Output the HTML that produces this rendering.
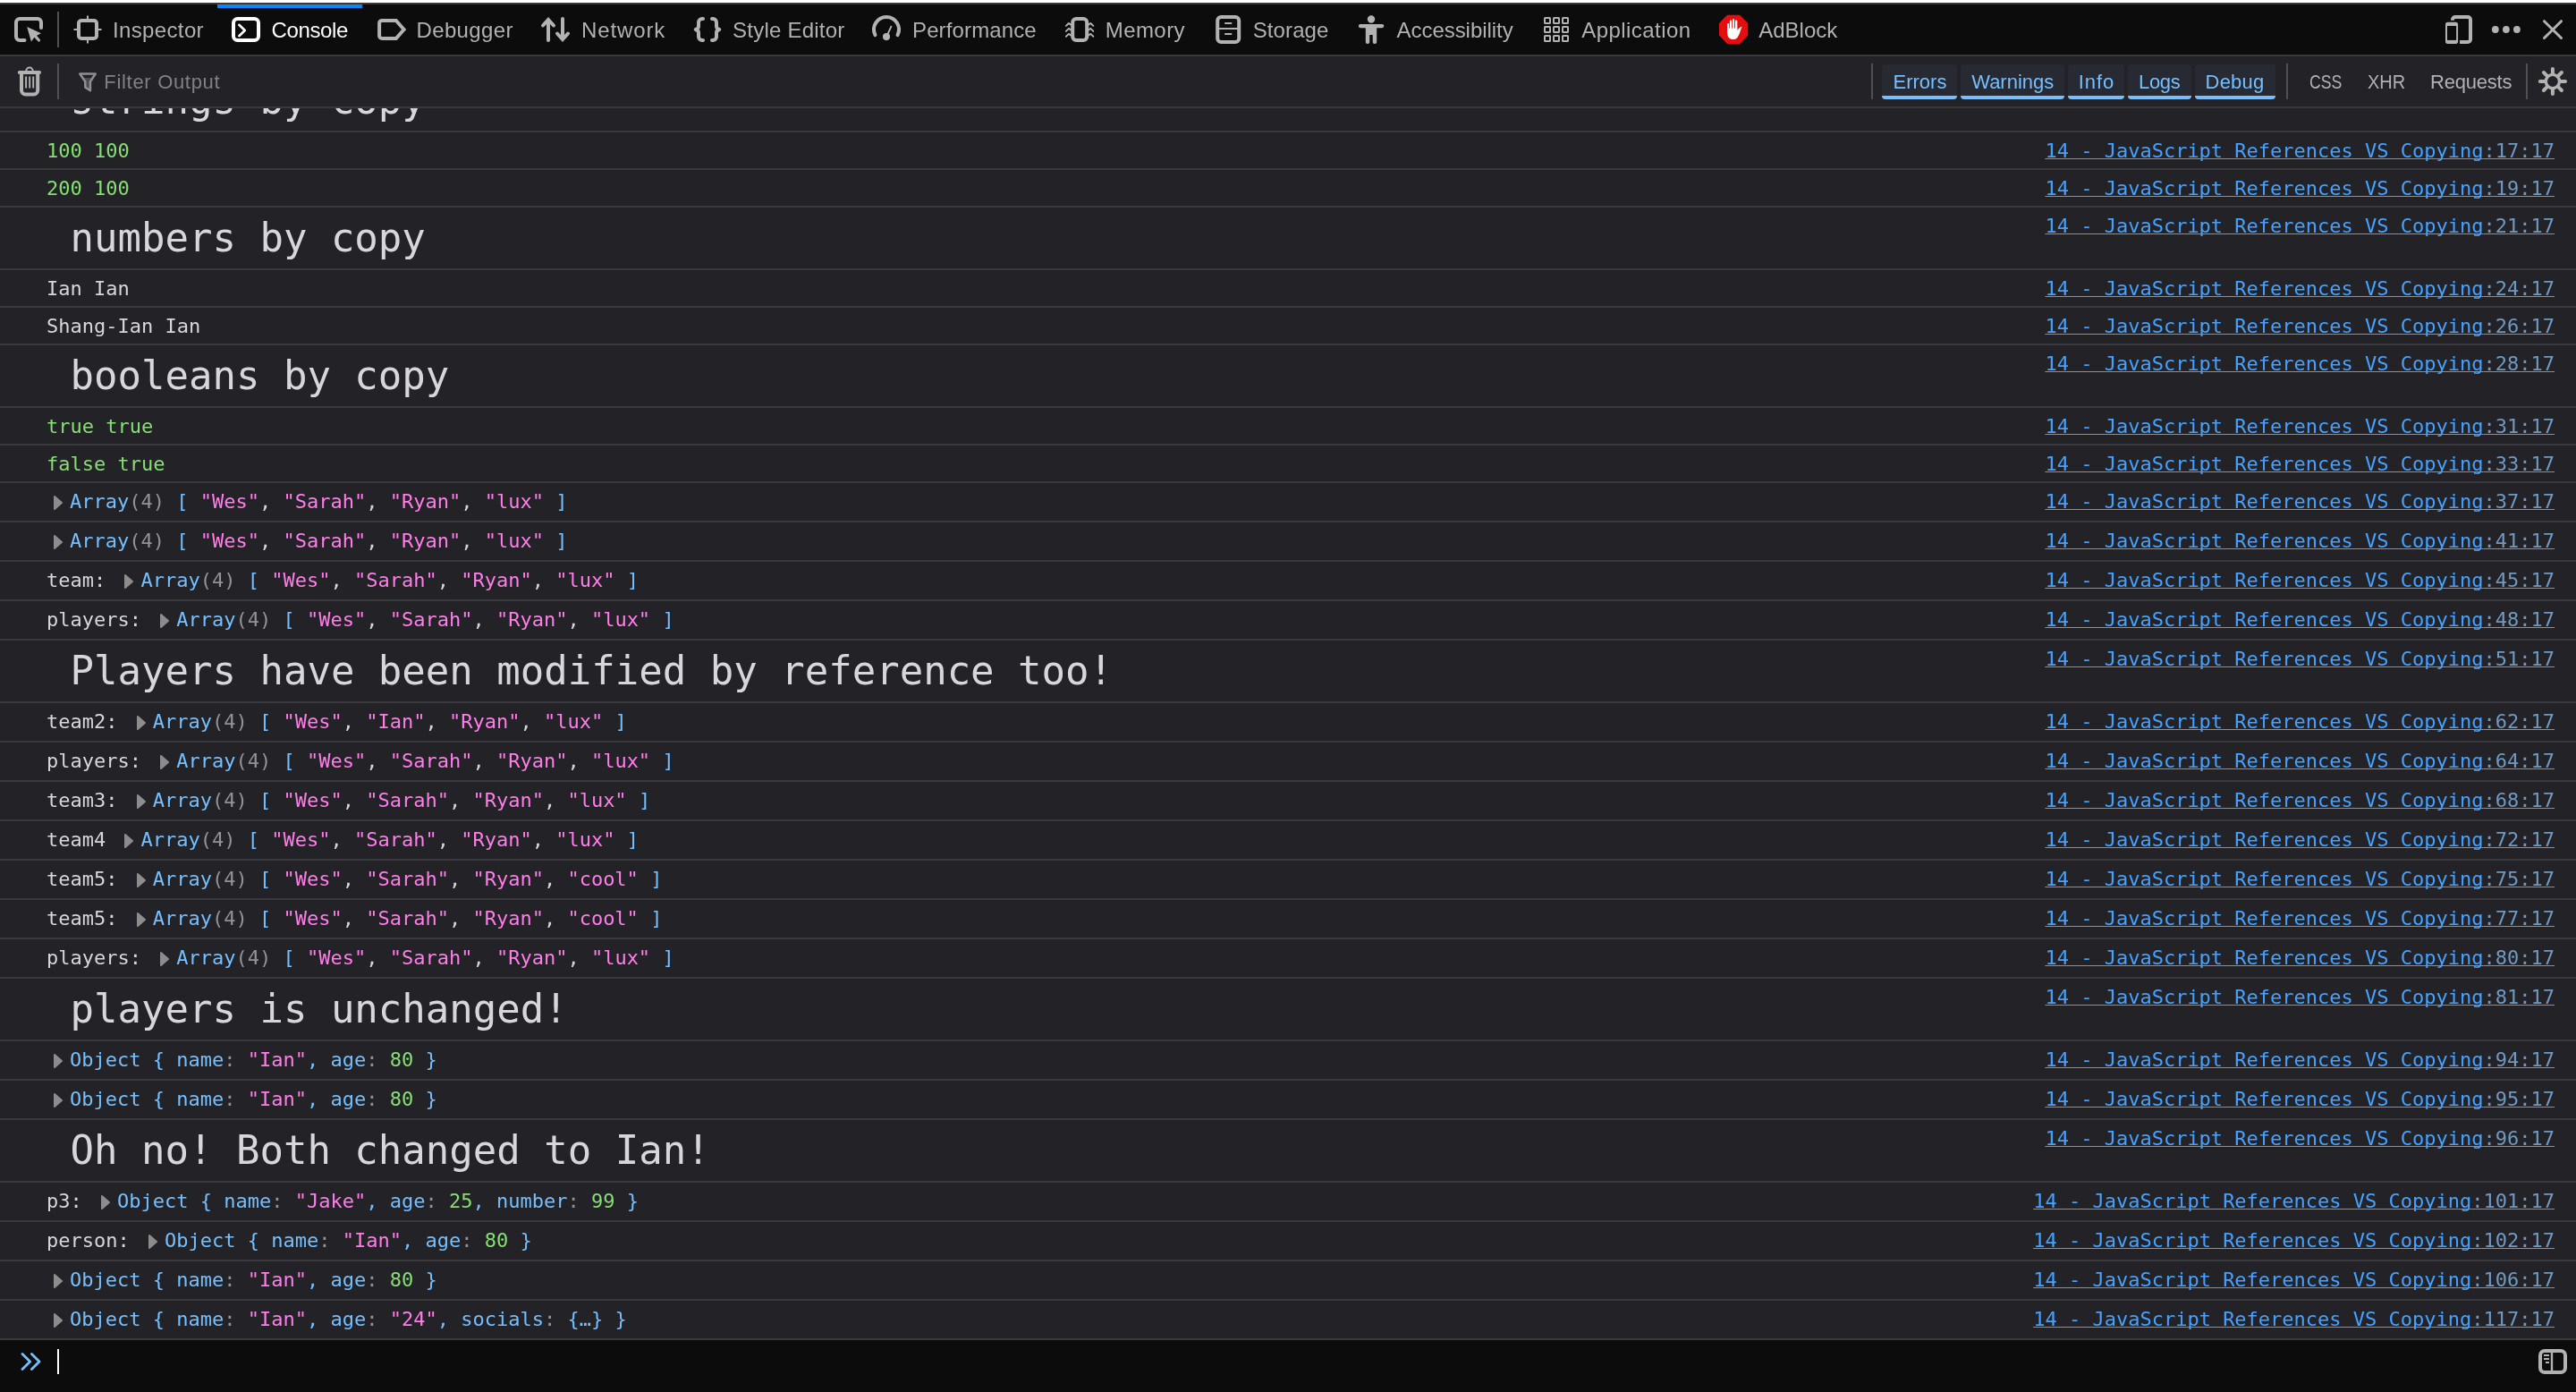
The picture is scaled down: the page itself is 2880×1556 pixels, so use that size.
<!DOCTYPE html>
<html lang="en">
<head>
<meta charset="utf-8">
<title>Console</title>
<style>
html,body{margin:0;padding:0;}
body{width:2880px;height:1556px;overflow:hidden;background:#232327;position:relative;
 font-family:"Liberation Sans","DejaVu Sans",sans-serif;color:#b1b1b3;}
b,i,em{font-weight:normal;font-style:normal;}
#topwhite{position:absolute;left:0;top:0;width:2880px;height:3px;background:#fff;}
#topline{position:absolute;left:0;top:3px;width:2880px;height:2px;background:#38383d;}
#tabs{position:absolute;left:0;top:5px;width:2880px;height:56px;background:#0c0c0d;}
#tabsb{position:absolute;left:0;top:61px;width:2880px;height:2px;background:#38383d;}
#filter{position:absolute;left:0;top:63px;width:2880px;height:56px;background:#232327;}
#filterb{position:absolute;left:0;top:119px;width:2880px;height:2px;background:#38383d;}
#out{will-change:transform;position:absolute;left:0;top:121px;width:2880px;height:1377px;overflow:hidden;
 font-family:"DejaVu Sans Mono","Liberation Mono",monospace;font-size:22px;color:#d7d7db;}
#input{position:absolute;left:0;top:1498px;width:2880px;height:58px;background:#0c0c0d;}
.r{position:relative;box-sizing:border-box;border-bottom:2px solid #38383d;height:42px;width:2880px;}
.r.ob{height:44px;}
.r.big{height:70px;}
.r.first{margin-top:-43px;}
.m{position:absolute;left:52px;top:1px;line-height:40px;height:40px;white-space:pre;}
.bt{font-size:44px;line-height:68px;display:inline-block;height:68px;position:relative;top:-1px;}
.lk{position:absolute;right:24px;top:1px;line-height:40px;color:#45a1ff;text-decoration:underline;text-decoration-skip-ink:none;text-decoration-thickness:1px;text-underline-offset:1px;}
.lk em{color:#7099c2;}
.n{color:#86de74;}
.s{color:#ff7de9;}
.o{color:#75bfff;}
.g{color:#939395;}
.k{color:#939395;}
.c{color:#d7d7db;}
.tw{display:inline-block;width:26px;height:18px;vertical-align:-3px;fill:#8c8c8e;stroke:#8c8c8e;stroke-width:2;stroke-linejoin:round;}

#tabs,#filter{will-change:transform;}
.lb{position:absolute;white-space:pre;color:#b1b1b3;}
.lb.t{top:1px;line-height:56px;font-size:24px;}
.lb.t.on{color:#fff;}
.lb.f{top:1px;line-height:56px;font-size:22px;}
.lb.ph{color:#808085;}
.lb.bl{color:#75bfff;}
.sp{position:absolute;width:2px;background:#505053;}
.act{position:absolute;left:243px;top:0;width:162px;height:4px;background:#0a84ff;}
.fb{position:absolute;top:9px;height:39px;background:linear-gradient(to bottom,#282a33 35px,#75bfff 35px);border-radius:4px;}
#ico{position:absolute;left:0;top:0;}
#input svg{position:absolute;left:0;top:0;}
.caret{position:absolute;left:64px;top:10px;width:2px;height:28px;background:#fff;}
</style>
</head>
<body>
<div id="topwhite"></div><div id="topline"></div>
<div id="tabs"><i class="act"></i><i class="sp" style="left:64px;top:8px;height:40px"></i><span class="lb t" style="left:126.0px;letter-spacing:0.36px;">Inspector</span><span class="lb t on" style="left:303.6px;letter-spacing:-0.38px;">Console</span><span class="lb t" style="left:465.5px;letter-spacing:0.36px;">Debugger</span><span class="lb t" style="left:650.0px;letter-spacing:0.87px;">Network</span><span class="lb t" style="left:819.0px;letter-spacing:0.24px;">Style Editor</span><span class="lb t" style="left:1020.0px;letter-spacing:0.13px;">Performance</span><span class="lb t" style="left:1235.7px;letter-spacing:0.45px;">Memory</span><span class="lb t" style="left:1400.7px;letter-spacing:0.11px;">Storage</span><span class="lb t" style="left:1561.5px;letter-spacing:-0.04px;">Accessibility</span><span class="lb t" style="left:1768.3px;letter-spacing:0.44px;">Application</span><span class="lb t" style="left:1966.2px;letter-spacing:0.02px;">AdBlock</span></div><div id="tabsb"></div>
<div id="filter"><i class="sp" style="left:64px;top:8px;height:40px"></i><i class="sp" style="left:2092px;top:8px;height:40px"></i><i class="sp" style="left:2556px;top:8px;height:40px"></i><i class="sp" style="left:2824px;top:8px;height:40px"></i><i class="fb" style="left:2104px;width:84px"></i><i class="fb" style="left:2192px;width:116px"></i><i class="fb" style="left:2312px;width:63px"></i><i class="fb" style="left:2379px;width:71px"></i><i class="fb" style="left:2454px;width:90px"></i><span class="lb f ph" style="left:116.3px;letter-spacing:0.69px;">Filter Output</span><span class="lb f bl" style="left:2116.5px;letter-spacing:0.00px;">Errors</span><span class="lb f bl" style="left:2204.2px;letter-spacing:-0.01px;">Warnings</span><span class="lb f bl" style="left:2323.7px;letter-spacing:0.93px;">Info</span><span class="lb f bl" style="left:2391.0px;letter-spacing:-0.33px;">Logs</span><span class="lb f bl" style="left:2465.5px;letter-spacing:0.25px;">Debug</span><span class="lb f" style="left:2581.8px;transform:scaleX(0.805);transform-origin:0 0;">CSS</span><span class="lb f" style="left:2646.7px;transform:scaleX(0.909);transform-origin:0 0;">XHR</span><span class="lb f" style="left:2717.0px;letter-spacing:-0.22px;">Requests</span></div><div id="filterb"></div>

<svg id="ico" width="2880" height="121" viewBox="0 0 2880 121" fill="none" stroke="#b2b2b3" stroke-width="4" stroke-linecap="round" stroke-linejoin="round">
<!-- picker -->
<path d="M46 31V25a4 4 0 0 0-4-4H22a4 4 0 0 0-4 4V41a4 4 0 0 0 4 4H27.5"/>
<path d="M30.2 30L46 37.200L41 39.700L44.7 44a1.6 1.6 0 0 1-2.4 2.100L38.4 41.800L34.9 46.500Z" fill="#b2b2b3" stroke="none"/>
<!-- inspector -->
<rect x="88" y="23" width="20" height="20" rx="3"/>
<path d="M98 17.500V21M98 45V48.500M82.5 33H86M110 33H113.5" stroke-width="2" stroke-linecap="butt"/>
<!-- console (active, white) -->
<g stroke="#fff"><rect x="261" y="21" width="28" height="24" rx="4.5"/>
<path d="M267.3 27.800L273.8 34L267.3 40.2" stroke-width="2.6"/></g>
<!-- debugger -->
<path d="M424.1 25.900a3 3 0 0 1 3-3H442.800L451.6 32.950L442.8 43H427.100a3 3 0 0 1-3-3Z" stroke-linejoin="miter"/>
<!-- network -->
<path d="M613 45V23M629 21V43"/><path d="M607 28.500L613 22L619 28.500M623 37.500L629 44L635 37.5" stroke-linejoin="miter"/>
<!-- style editor braces -->
<path d="M786 21h-1a4 4 0 0 0-4 4v4.500q0 2.5-3.3 3.500q3.3 1 3.3 3.500v4.500a4 4 0 0 0 4 4h1M796 21h1a4 4 0 0 1 4 4v4.500q0 2.5 3.3 3.500q-3.3 1-3.3 3.500v4.500a4 4 0 0 1-4 4h-1"/>
<!-- performance -->
<path d="M978.450 39.200A14 14 0 1 1 1003.550 39.2"/>
<circle cx="991" cy="41.1" r="4.050" fill="#b2b2b3" stroke="none"/>
<path d="M991 41.100L996.7 29" stroke-width="1.8" stroke-linecap="butt"/>
<!-- memory -->
<rect x="1199.2" y="21" width="16" height="24" rx="4"/>
<path d="M1191.9 28.9L1194.9 26.0L1197.2 27.6M1222.3 28.9L1219.3 26.0L1217 27.6M1191.9 34.9L1194.9 31.9L1197.2 33.5M1222.3 34.9L1219.3 31.9L1217 33.5M1191.9 40.8L1194.9 37.9L1197.2 39.5M1222.3 40.8L1219.3 37.9L1217 39.5" stroke-width="1.9"/>
<!-- storage -->
<rect x="1361.2" y="19" width="24" height="28" rx="4"/>
<path d="M1361.2 32H1385.2" stroke-width="2" stroke-linecap="butt"/>
<path d="M1369.2 26H1377.200M1369.2 38H1377.2" stroke-width="2" stroke-linecap="butt"/>
<!-- accessibility -->
<g fill="#b2b2b3" stroke="none"><circle cx="1533" cy="21.5" r="4.2"/>
<rect x="1518.8" y="27" width="28.5" height="4.2" rx="2.1"/>
<path d="M1526.8 29H1539.200V47a2 2 0 0 1-2 2h-.5a2 2 0 0 1-2-2V39h-3.500V47a2 2 0 0 1-2 2h-.4a2 2 0 0 1-2-2Z"/></g>
<!-- application grid -->
<g stroke-width="2" stroke-linejoin="miter"><rect x="1727" y="20" width="6" height="6" rx=".5"/><rect x="1737" y="20" width="6" height="6" rx=".5"/><rect x="1747" y="20" width="6" height="6" rx=".5"/>
<rect x="1727" y="30" width="6" height="6" rx=".5"/><rect x="1737" y="30" width="6" height="6" rx=".5"/><rect x="1747" y="30" width="6" height="6" rx=".5"/>
<rect x="1727" y="40" width="6" height="6" rx=".5"/><rect x="1737" y="40" width="6" height="6" rx=".5"/><rect x="1747" y="40" width="6" height="6" rx=".5"/></g>
<!-- adblock -->
<path d="M1931 16.800H1945L1954.2 26.100V39.500L1945 49H1931L1922 39.500V26.100Z" fill="#e40e0e" stroke="none"/>
<g fill="#fff" stroke="none"><rect x="1931.1" y="26" width="2.1" height="10" rx="1.050"/><rect x="1933.9" y="22.6" width="2.2" height="12" rx="1.1"/><rect x="1936.9" y="21" width="2.2" height="13" rx="1.1"/><rect x="1940" y="22.6" width="2.3" height="12" rx="1.1"/>
<path d="M1931.1 31.600H1942.300V34.300C1943.5 32.2 1945 30.3 1947.5 29.800C1946.6 32 1945.8 34.5 1944.9 37C1944 40 1942 44.1 1937.8 44.100C1933.5 44.1 1931.1 41 1931.1 37Z"/></g>
<!-- rdm -->
<path d="M2742 22.700V22a3 3 0 0 1 3-3H2759a3 3 0 0 1 3 3V44a3 3 0 0 1-3 3H2750" stroke-linecap="butt"/>
<rect x="2734" y="24.8" width="14.1" height="24.1" rx="2.6" fill="#b2b2b3" stroke="none"/><rect x="2736" y="29" width="10.1" height="15.9" fill="#0c0c0d" stroke="none"/>
<!-- dots -->
<g fill="#b2b2b3" stroke="none"><circle cx="2789.8" cy="33" r="3.9"/><circle cx="2801.9" cy="33" r="3.9"/><circle cx="2813.9" cy="33" r="3.9"/></g>
<!-- close -->
<path d="M2844.5 23.700L2863.5 42.500M2863.5 23.700L2844.5 42.5" stroke-width="3"/>
<!-- trash -->
<path d="M21.8 81.100H44M24 82V101a4.5 4.5 0 0 0 4.5 4.500H37.700a4.5 4.5 0 0 0 4.5-4.500V82"/>
<path d="M29.3 79.300a3.7 3.7 0 0 1 7.4 0" stroke-width="2"/>
<path d="M29.1 85.500V98.500M33.2 85.500V98.500M37.2 85.500V98.5" stroke-width="1.9" stroke-linecap="butt"/>
<!-- funnel -->
<path d="M92.5 87H103.500L100.9 91.300V101.300L95.3 97.600V91.300Z" fill="#4b4b50" stroke="none"/>
<path d="M89.3 82.500H106.700L100.9 91.300V101.300L95.3 97.600V91.300Z" stroke="#8f8f92" stroke-width="2.5" stroke-linejoin="round"/>
<!-- gear -->
<circle cx="2853.9" cy="91.0" r="7.6" stroke-width="3.4"/><path d="M2861.9 91.0L2868.0 91.0M2859.6 96.7L2863.9 101.0M2853.9 99.0L2853.9 105.1M2848.2 96.7L2843.9 101.0M2845.9 91.0L2839.8 91.0M2848.2 85.3L2843.9 81.0M2853.9 83.0L2853.9 76.9M2859.6 85.3L2863.9 81.0"/>
</svg>

<div id="out">
<div class="r big first"><span class="m"><span class="bt"> strings by copy</span></span></div>
<div class="r t"><span class="m"><b class="n">100 100</b></span><a class="lk">14 - JavaScript References VS Copying<em>:17:17</em></a></div>
<div class="r t"><span class="m"><b class="n">200 100</b></span><a class="lk">14 - JavaScript References VS Copying<em>:19:17</em></a></div>
<div class="r big"><span class="m"><span class="bt"> numbers by copy</span></span><a class="lk">14 - JavaScript References VS Copying<em>:21:17</em></a></div>
<div class="r t"><span class="m">Ian Ian</span><a class="lk">14 - JavaScript References VS Copying<em>:24:17</em></a></div>
<div class="r t"><span class="m">Shang-Ian Ian</span><a class="lk">14 - JavaScript References VS Copying<em>:26:17</em></a></div>
<div class="r big"><span class="m"><span class="bt"> booleans by copy</span></span><a class="lk">14 - JavaScript References VS Copying<em>:28:17</em></a></div>
<div class="r t"><span class="m"><b class="n">true true</b></span><a class="lk">14 - JavaScript References VS Copying<em>:31:17</em></a></div>
<div class="r t"><span class="m"><b class="n">false true</b></span><a class="lk">14 - JavaScript References VS Copying<em>:33:17</em></a></div>
<div class="r ob"><span class="m"><svg class="tw" viewBox="0 0 26 18"><path d="M9 2L17 9L9 16Z"/></svg><b class="o">Array</b><b class="g">(4)</b> <b class="o">[</b> <b class="s">"Wes"</b><b class="c">,</b> <b class="s">"Sarah"</b><b class="c">,</b> <b class="s">"Ryan"</b><b class="c">,</b> <b class="s">"lux"</b> <b class="o">]</b></span><a class="lk">14 - JavaScript References VS Copying<em>:37:17</em></a></div>
<div class="r ob"><span class="m"><svg class="tw" viewBox="0 0 26 18"><path d="M9 2L17 9L9 16Z"/></svg><b class="o">Array</b><b class="g">(4)</b> <b class="o">[</b> <b class="s">"Wes"</b><b class="c">,</b> <b class="s">"Sarah"</b><b class="c">,</b> <b class="s">"Ryan"</b><b class="c">,</b> <b class="s">"lux"</b> <b class="o">]</b></span><a class="lk">14 - JavaScript References VS Copying<em>:41:17</em></a></div>
<div class="r ob"><span class="m">team: <svg class="tw" viewBox="0 0 26 18"><path d="M9 2L17 9L9 16Z"/></svg><b class="o">Array</b><b class="g">(4)</b> <b class="o">[</b> <b class="s">"Wes"</b><b class="c">,</b> <b class="s">"Sarah"</b><b class="c">,</b> <b class="s">"Ryan"</b><b class="c">,</b> <b class="s">"lux"</b> <b class="o">]</b></span><a class="lk">14 - JavaScript References VS Copying<em>:45:17</em></a></div>
<div class="r ob"><span class="m">players: <svg class="tw" viewBox="0 0 26 18"><path d="M9 2L17 9L9 16Z"/></svg><b class="o">Array</b><b class="g">(4)</b> <b class="o">[</b> <b class="s">"Wes"</b><b class="c">,</b> <b class="s">"Sarah"</b><b class="c">,</b> <b class="s">"Ryan"</b><b class="c">,</b> <b class="s">"lux"</b> <b class="o">]</b></span><a class="lk">14 - JavaScript References VS Copying<em>:48:17</em></a></div>
<div class="r big"><span class="m"><span class="bt"> Players have been modified by reference too!</span></span><a class="lk">14 - JavaScript References VS Copying<em>:51:17</em></a></div>
<div class="r ob"><span class="m">team2: <svg class="tw" viewBox="0 0 26 18"><path d="M9 2L17 9L9 16Z"/></svg><b class="o">Array</b><b class="g">(4)</b> <b class="o">[</b> <b class="s">"Wes"</b><b class="c">,</b> <b class="s">"Ian"</b><b class="c">,</b> <b class="s">"Ryan"</b><b class="c">,</b> <b class="s">"lux"</b> <b class="o">]</b></span><a class="lk">14 - JavaScript References VS Copying<em>:62:17</em></a></div>
<div class="r ob"><span class="m">players: <svg class="tw" viewBox="0 0 26 18"><path d="M9 2L17 9L9 16Z"/></svg><b class="o">Array</b><b class="g">(4)</b> <b class="o">[</b> <b class="s">"Wes"</b><b class="c">,</b> <b class="s">"Sarah"</b><b class="c">,</b> <b class="s">"Ryan"</b><b class="c">,</b> <b class="s">"lux"</b> <b class="o">]</b></span><a class="lk">14 - JavaScript References VS Copying<em>:64:17</em></a></div>
<div class="r ob"><span class="m">team3: <svg class="tw" viewBox="0 0 26 18"><path d="M9 2L17 9L9 16Z"/></svg><b class="o">Array</b><b class="g">(4)</b> <b class="o">[</b> <b class="s">"Wes"</b><b class="c">,</b> <b class="s">"Sarah"</b><b class="c">,</b> <b class="s">"Ryan"</b><b class="c">,</b> <b class="s">"lux"</b> <b class="o">]</b></span><a class="lk">14 - JavaScript References VS Copying<em>:68:17</em></a></div>
<div class="r ob"><span class="m">team4 <svg class="tw" viewBox="0 0 26 18"><path d="M9 2L17 9L9 16Z"/></svg><b class="o">Array</b><b class="g">(4)</b> <b class="o">[</b> <b class="s">"Wes"</b><b class="c">,</b> <b class="s">"Sarah"</b><b class="c">,</b> <b class="s">"Ryan"</b><b class="c">,</b> <b class="s">"lux"</b> <b class="o">]</b></span><a class="lk">14 - JavaScript References VS Copying<em>:72:17</em></a></div>
<div class="r ob"><span class="m">team5: <svg class="tw" viewBox="0 0 26 18"><path d="M9 2L17 9L9 16Z"/></svg><b class="o">Array</b><b class="g">(4)</b> <b class="o">[</b> <b class="s">"Wes"</b><b class="c">,</b> <b class="s">"Sarah"</b><b class="c">,</b> <b class="s">"Ryan"</b><b class="c">,</b> <b class="s">"cool"</b> <b class="o">]</b></span><a class="lk">14 - JavaScript References VS Copying<em>:75:17</em></a></div>
<div class="r ob"><span class="m">team5: <svg class="tw" viewBox="0 0 26 18"><path d="M9 2L17 9L9 16Z"/></svg><b class="o">Array</b><b class="g">(4)</b> <b class="o">[</b> <b class="s">"Wes"</b><b class="c">,</b> <b class="s">"Sarah"</b><b class="c">,</b> <b class="s">"Ryan"</b><b class="c">,</b> <b class="s">"cool"</b> <b class="o">]</b></span><a class="lk">14 - JavaScript References VS Copying<em>:77:17</em></a></div>
<div class="r ob"><span class="m">players: <svg class="tw" viewBox="0 0 26 18"><path d="M9 2L17 9L9 16Z"/></svg><b class="o">Array</b><b class="g">(4)</b> <b class="o">[</b> <b class="s">"Wes"</b><b class="c">,</b> <b class="s">"Sarah"</b><b class="c">,</b> <b class="s">"Ryan"</b><b class="c">,</b> <b class="s">"lux"</b> <b class="o">]</b></span><a class="lk">14 - JavaScript References VS Copying<em>:80:17</em></a></div>
<div class="r big"><span class="m"><span class="bt"> players is unchanged!</span></span><a class="lk">14 - JavaScript References VS Copying<em>:81:17</em></a></div>
<div class="r ob"><span class="m"><svg class="tw" viewBox="0 0 26 18"><path d="M9 2L17 9L9 16Z"/></svg><b class="o">Object</b> <b class="o">{</b> <b class="o">name</b><b class="k">:</b> <b class="s">"Ian"</b><b class="o">,</b> <b class="o">age</b><b class="k">:</b> <b class="n">80</b> <b class="o">}</b></span><a class="lk">14 - JavaScript References VS Copying<em>:94:17</em></a></div>
<div class="r ob"><span class="m"><svg class="tw" viewBox="0 0 26 18"><path d="M9 2L17 9L9 16Z"/></svg><b class="o">Object</b> <b class="o">{</b> <b class="o">name</b><b class="k">:</b> <b class="s">"Ian"</b><b class="o">,</b> <b class="o">age</b><b class="k">:</b> <b class="n">80</b> <b class="o">}</b></span><a class="lk">14 - JavaScript References VS Copying<em>:95:17</em></a></div>
<div class="r big"><span class="m"><span class="bt"> Oh no! Both changed to Ian!</span></span><a class="lk">14 - JavaScript References VS Copying<em>:96:17</em></a></div>
<div class="r ob"><span class="m">p3: <svg class="tw" viewBox="0 0 26 18"><path d="M9 2L17 9L9 16Z"/></svg><b class="o">Object</b> <b class="o">{</b> <b class="o">name</b><b class="k">:</b> <b class="s">"Jake"</b><b class="o">,</b> <b class="o">age</b><b class="k">:</b> <b class="n">25</b><b class="o">,</b> <b class="o">number</b><b class="k">:</b> <b class="n">99</b> <b class="o">}</b></span><a class="lk">14 - JavaScript References VS Copying<em>:101:17</em></a></div>
<div class="r ob"><span class="m">person: <svg class="tw" viewBox="0 0 26 18"><path d="M9 2L17 9L9 16Z"/></svg><b class="o">Object</b> <b class="o">{</b> <b class="o">name</b><b class="k">:</b> <b class="s">"Ian"</b><b class="o">,</b> <b class="o">age</b><b class="k">:</b> <b class="n">80</b> <b class="o">}</b></span><a class="lk">14 - JavaScript References VS Copying<em>:102:17</em></a></div>
<div class="r ob"><span class="m"><svg class="tw" viewBox="0 0 26 18"><path d="M9 2L17 9L9 16Z"/></svg><b class="o">Object</b> <b class="o">{</b> <b class="o">name</b><b class="k">:</b> <b class="s">"Ian"</b><b class="o">,</b> <b class="o">age</b><b class="k">:</b> <b class="n">80</b> <b class="o">}</b></span><a class="lk">14 - JavaScript References VS Copying<em>:106:17</em></a></div>
<div class="r ob"><span class="m"><svg class="tw" viewBox="0 0 26 18"><path d="M9 2L17 9L9 16Z"/></svg><b class="o">Object</b> <b class="o">{</b> <b class="o">name</b><b class="k">:</b> <b class="s">"Ian"</b><b class="o">,</b> <b class="o">age</b><b class="k">:</b> <b class="s">"24"</b><b class="o">,</b> <b class="o">socials</b><b class="k">:</b> <b class="o">{…}</b> <b class="o">}</b></span><a class="lk">14 - JavaScript References VS Copying<em>:117:17</em></a></div>
</div>
<div id="input"><svg width="2880" height="58" viewBox="0 1498 2880 58" fill="none" stroke-linecap="round" stroke-linejoin="round">
<path d="M25 1513.500L33.6 1522L25 1530.500M35.4 1513.500L44 1522L35.4 1530.5" stroke="#75bfff" stroke-width="2.8"/>
<g stroke="#b2b2b3"><rect x="2840" y="1510" width="28" height="24" rx="5" stroke-width="4"/>
<path d="M2853 1510V1534" stroke-width="2.4" stroke-linecap="butt"/>
<path d="M2844 1515H2850M2844 1519H2850M2846 1523H2850" stroke-width="1.8" stroke-linecap="butt"/></g></svg><i class="caret"></i></div>
</body>
</html>
